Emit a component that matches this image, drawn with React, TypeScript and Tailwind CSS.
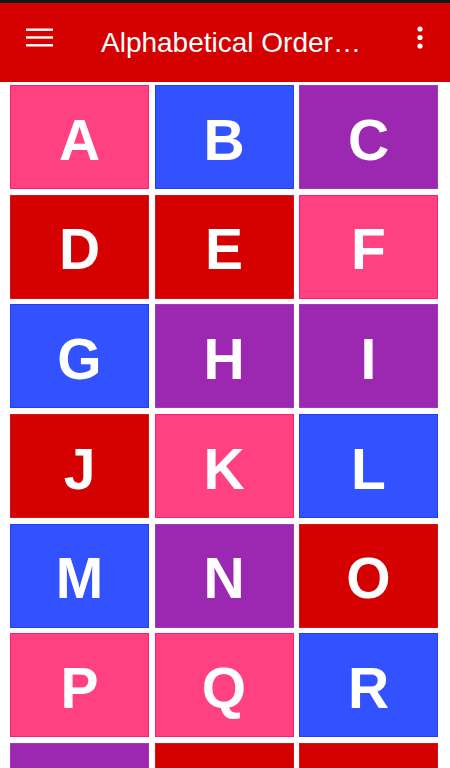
import React from "react";

type Tile = { l: string; c: string };

const COLORS: Record<string, string> = {
  pink: "bg-[#ff4081] border-[#ff1f72]",
  blue: "bg-[#3352ff] border-[#1f3cff]",
  purple: "bg-[#9c27b0] border-[#a23ab8]",
  red: "bg-[#d50000] border-[#d81414]",
};

const tiles: Tile[] = [
  { l: "A", c: "pink" },
  { l: "B", c: "blue" },
  { l: "C", c: "purple" },
  { l: "D", c: "red" },
  { l: "E", c: "red" },
  { l: "F", c: "pink" },
  { l: "G", c: "blue" },
  { l: "H", c: "purple" },
  { l: "I", c: "purple" },
  { l: "J", c: "red" },
  { l: "K", c: "pink" },
  { l: "L", c: "blue" },
  { l: "M", c: "blue" },
  { l: "N", c: "purple" },
  { l: "O", c: "red" },
  { l: "P", c: "pink" },
  { l: "Q", c: "pink" },
  { l: "R", c: "blue" },
  { l: "S", c: "purple" },
  { l: "T", c: "red" },
  { l: "U", c: "red" },
];

export default function App() {
  return (
    <div className="w-[450px] h-[768px] overflow-hidden bg-white flex flex-col" style={{ fontFamily: '"Liberation Sans", Arial, sans-serif' }}>
      <div className="h-[3px] bg-[#161616] shrink-0" />
      <header className="h-[79px] shrink-0 bg-[#d50000] flex items-center text-white">
        <div className="w-[101px] shrink-0 flex items-center -mt-[11px]">
          <svg className="ml-[26px]" width="27" height="19" viewBox="0 0 27 19">
            <rect x="0" y="0.5" width="27" height="2.4" fill="#fff" />
            <rect x="0" y="8.3" width="27" height="2.4" fill="#fff" />
            <rect x="0" y="16.1" width="27" height="2.4" fill="#fff" />
          </svg>
        </div>
        <div className="flex-1 text-[28px] leading-none whitespace-nowrap mt-[1px]">Alphabetical Order…</div>
        <div className="w-[62px] shrink-0 flex justify-center pl-[1px] -mt-[11px]">
          <svg width="6" height="23" viewBox="0 0 6 23">
            <circle cx="3" cy="3" r="2.6" fill="#fff" />
            <circle cx="3" cy="11.5" r="2.6" fill="#fff" />
            <circle cx="3" cy="20" r="2.6" fill="#fff" />
          </svg>
        </div>
      </header>
      <div className="grid grid-cols-[139px_139px_139px] gap-x-[5.5px] gap-y-[5.7px] pl-[10px] pt-[3px]">
        {tiles.map((t) => (
          <div
            key={t.l}
            className={`h-[104px] border flex items-center justify-center pt-[6px] text-white font-bold text-[57px] leading-none ${COLORS[t.c]}`}
          >
            <span>{t.l}</span>
          </div>
        ))}
      </div>
    </div>
  );
}
